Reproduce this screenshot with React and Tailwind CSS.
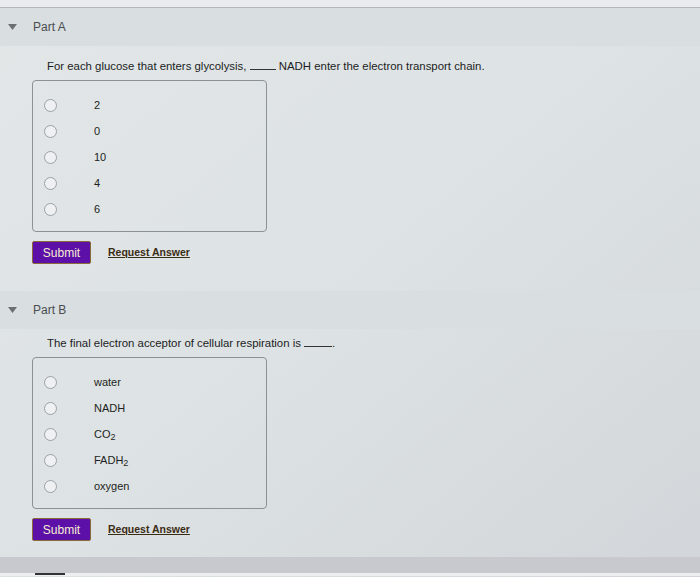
import { useState } from "react";

const partA = {
  title: "Part A",
  question: (
    <>
      For each glucose that enters glycolysis, <span className="inline-block w-[26px] border-b border-[#333] align-baseline" /> NADH enter the electron transport chain.
    </>
  ),
  options: ["2", "0", "10", "4", "6"],
};

const partB = {
  title: "Part B",
  question: (
    <>
      The final electron acceptor of cellular respiration is <span className="inline-block w-[28px] border-b border-[#333] align-baseline" />.
    </>
  ),
  options: [
    "water",
    "NADH",
    <>CO<sub className="text-[9px]">2</sub></>,
    <>FADH<sub className="text-[9px]">2</sub></>,
    "oxygen",
  ],
};

function PartHeader({ title }) {
  return (
    <div className="h-[38px] flex items-center bg-[#d9dee0]">
      <svg width="9" height="6" viewBox="0 0 9 6" className="ml-[8px] mr-[16px]">
        <path d="M0 0 L9 0 L4.5 6 Z" fill="#6b6f72" />
      </svg>
      <span className="text-[12px] text-[#4a4d50]">{title}</span>
    </div>
  );
}

function Choices({ options, name }) {
  const [picked, setPicked] = useState(null);
  return (
    <div className="w-[235px] h-[152px] border border-[#8b9195] rounded-[4px] pt-[17px] flex flex-col gap-[12px]">
      {options.map((opt, i) => (
        <label key={i} className="flex items-center h-[14px] cursor-pointer">
          <input
            type="radio"
            name={name}
            checked={picked === i}
            onChange={() => setPicked(i)}
            className="sr-only"
          />
          <span className="ml-[11px] w-[13px] h-[13px] rounded-full border border-[#9ba1a5] bg-[#eef0f1]" />
          <span className="ml-[37px] text-[11px] text-[#1d1f21]">{opt}</span>
        </label>
      ))}
    </div>
  );
}

function Actions() {
  return (
    <div className="flex items-center mt-[9px]">
      <button className="w-[59px] h-[23px] bg-[#5c10a8] border border-[#8a6a3a] rounded-[2px] text-[12px] text-[#f6ecd0]">
        Submit
      </button>
      <a href="#" className="ml-[17px] text-[10.5px] font-bold text-[#3b2c14] underline">
        Request Answer
      </a>
    </div>
  );
}

function Part({ data, name, gapTop }) {
  return (
    <section>
      <PartHeader title={data.title} />
      <div className="pl-[32px]" style={{ paddingTop: gapTop }}>
        <p className="text-[11.4px] text-[#1b1d1f] pl-[15px] mb-[7px] leading-[14px]">{data.question}</p>
        <Choices options={data.options} name={name} />
        <Actions />
      </div>
    </section>
  );
}

export default function App() {
  return (
    <div
      className="w-[700px] h-[577px] overflow-hidden bg-gradient-to-br from-[#e2e6e7] via-[#dde2e4] to-[#d2d6da]"
      style={{ fontFamily: '"Liberation Sans", Arial, sans-serif' }}
    >
      <div className="h-[8px] bg-[#e9ebec] border-b border-[#b3b8bb]" />
      <Part data={partA} name="partA" gapTop={13} />
      <div className="h-[27px]" />
      <Part data={partB} name="partB" gapTop={7} />
      <div className="mt-[16px] h-[16px] bg-[#c8c9cf]" />
      <div className="h-[3px] bg-[#eceef0] pl-[35px]">
        <div className="w-[30px] h-[2px] bg-[#333]" />
      </div>
    </div>
  );
}
